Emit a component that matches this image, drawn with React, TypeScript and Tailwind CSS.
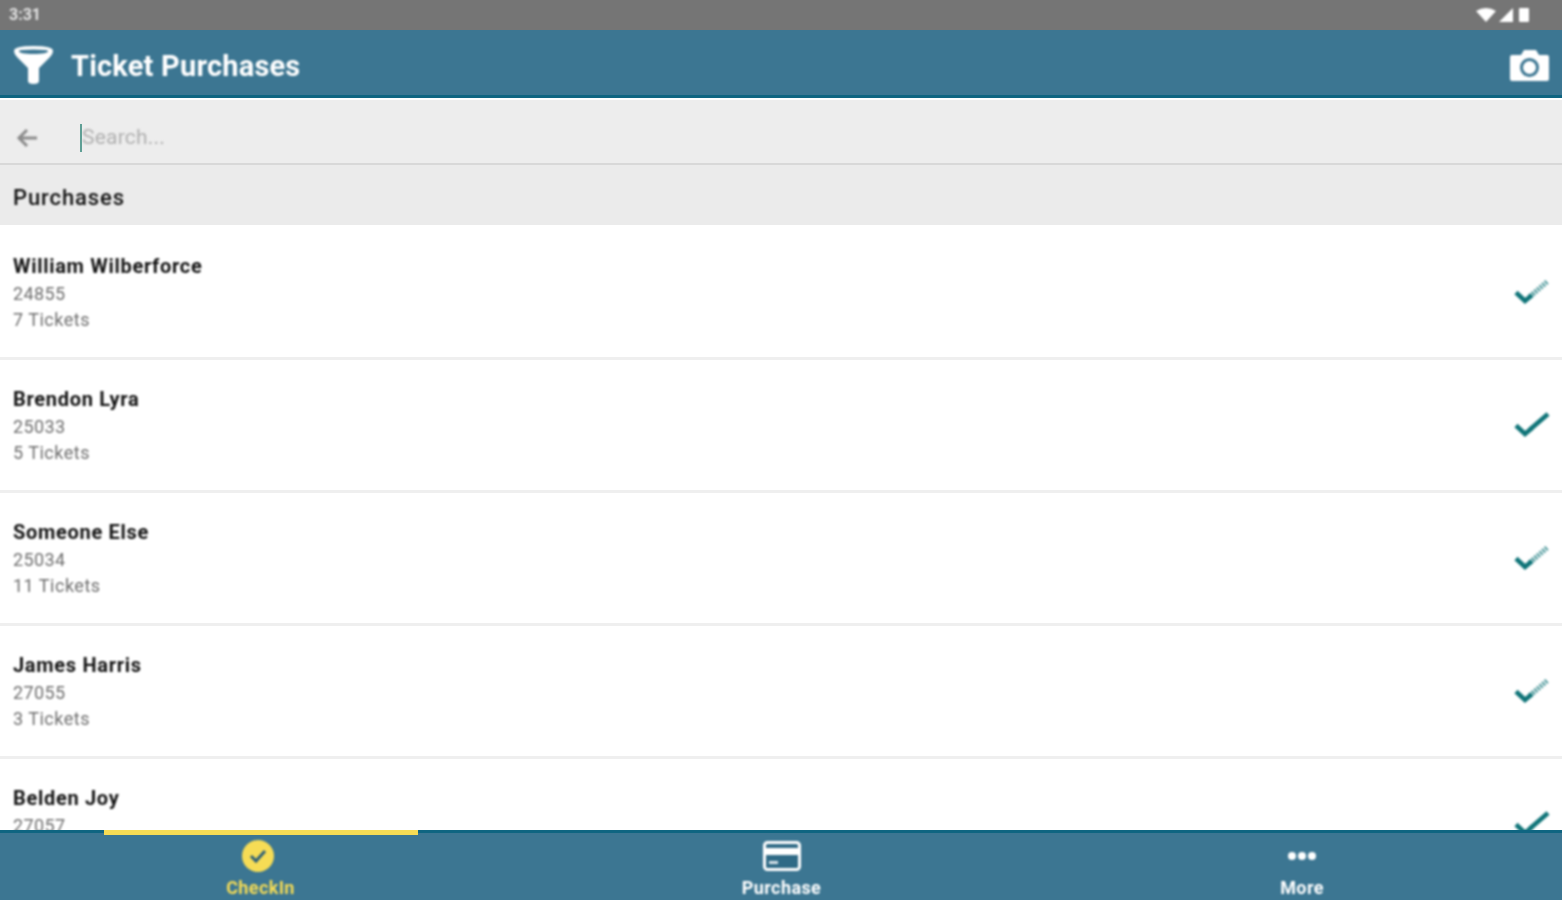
import React from 'react';

const purchases = [
  { name: 'William Wilberforce', id: '24855', tickets: '7 Tickets', partial: true },
  { name: 'Brendon Lyra', id: '25033', tickets: '5 Tickets', partial: false },
  { name: 'Someone Else', id: '25034', tickets: '11 Tickets', partial: true },
  { name: 'James Harris', id: '27055', tickets: '3 Tickets', partial: true },
  { name: 'Belden Joy', id: '27057', tickets: '', partial: false },
];

function Check({ partial }: { partial: boolean }) {
  return (
    <svg width="36" height="28" viewBox="0 0 36 28" fill="none" className="shrink-0 blur-[0.8px]">
      <path d="M2 14.5 L11 23 L18 17" stroke="#0f7478" strokeWidth="4.6" />
      {partial ? (
        <path d="M16 18.5 L34 3" stroke="#0f7478" strokeWidth="5" strokeDasharray="2 1.4" opacity="0.75" />
      ) : (
        <path d="M16 18.5 L34 3" stroke="#0f7478" strokeWidth="4.6" />
      )}
    </svg>
  );
}

export default function App() {
  return (
    <div className="h-[900px] w-full flex flex-col overflow-hidden bg-white font-['Roboto',sans-serif]">
      <div className="h-[30px] bg-[#757575] flex items-center justify-between pl-[9px] pr-[33px] shrink-0">
        <span className="text-[16px] font-bold text-[#e2e2e2] blur-[0.8px]">3:31</span>
        <div className="flex items-center gap-[3px] blur-[0.8px]">
          <svg width="20" height="14" viewBox="0 0 20 14" fill="white">
            <path d="M0 3 Q10 -3 20 3 L10 14 Z" />
          </svg>
          <svg width="14" height="14" viewBox="0 0 14 14" fill="white">
            <path d="M14 0 V14 H0 Z" />
          </svg>
          <div className="w-[10px] h-[14px] bg-white rounded-[1px] ml-[3px]" />
        </div>
      </div>

      <div className="h-[68px] shrink-0 bg-[#3c7692] border-b-[3px] border-[#0f6581] flex items-center justify-between pt-[4px] pl-[14px] pr-[13px]">
        <div className="flex items-center gap-[18px] blur-[0.8px]">
          <svg width="39" height="40" viewBox="0 0 39 40" fill="white">
            <path
              fillRule="evenodd"
              d="M0 6 Q0 1 19.5 1 Q39 1 39 6 Q39 9 36 12 L25 23 V36 Q25 39 19.5 39 Q14 39 14 36 V23 L3 12 Q0 9 0 6 Z M5 6 Q5 9 19.5 9 Q34 9 34 6 Q34 4.5 19.5 4.5 Q5 4.5 5 6 Z"
            />
          </svg>
          <span className="mt-[4px] text-[29px] font-bold text-white tracking-[0.2px]">Ticket Purchases</span>
        </div>
        <svg width="39" height="32" viewBox="0 0 39 32" fill="white" className="blur-[0.8px]">
          <path
            fillRule="evenodd"
            d="M2 6 H11 L14 1 H26 L29 6 H37 Q39 6 39 8 V30 Q39 32 37 32 H2 Q0 32 0 30 V8 Q0 6 2 6 Z M19.5 9 A9.5 9.5 0 1 0 19.5 28 A9.5 9.5 0 1 0 19.5 9 Z M19.5 12 A6.5 6.5 0 1 1 19.5 25 A6.5 6.5 0 1 1 19.5 12 Z"
          />
        </svg>
      </div>

      <div className="h-[2px] shrink-0 bg-white" />

      <div className="h-[65px] shrink-0 bg-[#ededed] border-b-2 border-[#d8d8d8] flex items-center pt-[12px] pl-[16px]">
        <svg width="22" height="20" viewBox="0 0 22 20" fill="none" stroke="#8b8b8b" strokeWidth="3" className="blur-[0.8px]">
          <path d="M21 10 H3 M11 2 L3 10 L11 18" />
        </svg>
        <div className="ml-[42px] h-[28px] w-[2px] bg-[#5f9f95] blur-[0.4px]" />
        <span className="text-[21px] text-[#b0b0b0] tracking-[0.2px] blur-[0.8px]">Search...</span>
      </div>

      <div className="h-[60px] shrink-0 bg-[#ebebeb] flex items-center pt-[4px] pl-[13px]">
        <span className="text-[22px] font-medium text-[#111111] tracking-[0.9px] blur-[0.8px]">Purchases</span>
      </div>

      <div className="flex-1 min-h-0 overflow-hidden pt-[2px]">
        {purchases.map((p) => (
          <div
            key={p.id}
            className="h-[133px] shrink-0 border-b-[3px] border-[#efefef] flex items-center justify-between pl-[13px] pr-[12px]"
          >
            <div className="flex flex-col pt-[1px] blur-[0.8px]">
              <span className="text-[20px] leading-[28px] font-bold text-[#141414] tracking-[0.7px]">{p.name}</span>
              <span className="mt-[1px] text-[18px] leading-[26px] text-[#6e6e6e] tracking-[0.4px]">{p.id}</span>
              <span className="h-[26px] text-[18px] leading-[26px] text-[#6e6e6e] tracking-[0.5px]">{p.tickets}</span>
            </div>
            <Check partial={p.partial} />
          </div>
        ))}
      </div>

      <div className="h-[70px] shrink-0 bg-[#3c7692] border-t-[3px] border-[#0f6581] flex relative">
        <div className="absolute left-[104px] top-[-3px] w-[314px] h-[5px] bg-[#f6dc55]" />
        <div className="w-[521px] flex flex-col items-center pt-[6px] blur-[0.8px]">
          <svg width="34" height="34" viewBox="0 0 34 34" className="-ml-[5px]">
            <circle cx="17" cy="17" r="16" fill="#f6dc55" />
            <path d="M10 17 L15 22 L24 12" stroke="#2d5f78" strokeWidth="3" fill="none" />
          </svg>
          <span className="text-[18px] leading-[20px] font-bold text-[#f6dc55] tracking-[0.4px] mt-[5px]">CheckIn</span>
        </div>
        <div className="w-[521px] flex flex-col items-center pt-[6px] blur-[0.8px]">
          <svg width="38" height="34" viewBox="0 0 38 34">
            <rect x="1.5" y="3.5" width="35" height="27" rx="3" fill="#2f6a86" stroke="white" strokeWidth="3" />
            <rect x="2" y="9" width="34" height="7" fill="white" />
            <rect x="6" y="22" width="9" height="3" fill="white" opacity="0.8" />
          </svg>
          <span className="text-[18px] leading-[20px] font-bold text-white tracking-[0.4px] mt-[5px]">Purchase</span>
        </div>
        <div className="w-[520px] flex flex-col items-center pt-[6px] blur-[0.8px]">
          <div className="h-[34px] flex items-center gap-[2px]">
            <span className="w-[8px] h-[8px] rounded-full bg-white" />
            <span className="w-[8px] h-[8px] rounded-full bg-white" />
            <span className="w-[8px] h-[8px] rounded-full bg-white" />
          </div>
          <span className="text-[18px] leading-[20px] font-bold text-white tracking-[0.4px] mt-[5px]">More</span>
        </div>
      </div>
    </div>
  );
}
